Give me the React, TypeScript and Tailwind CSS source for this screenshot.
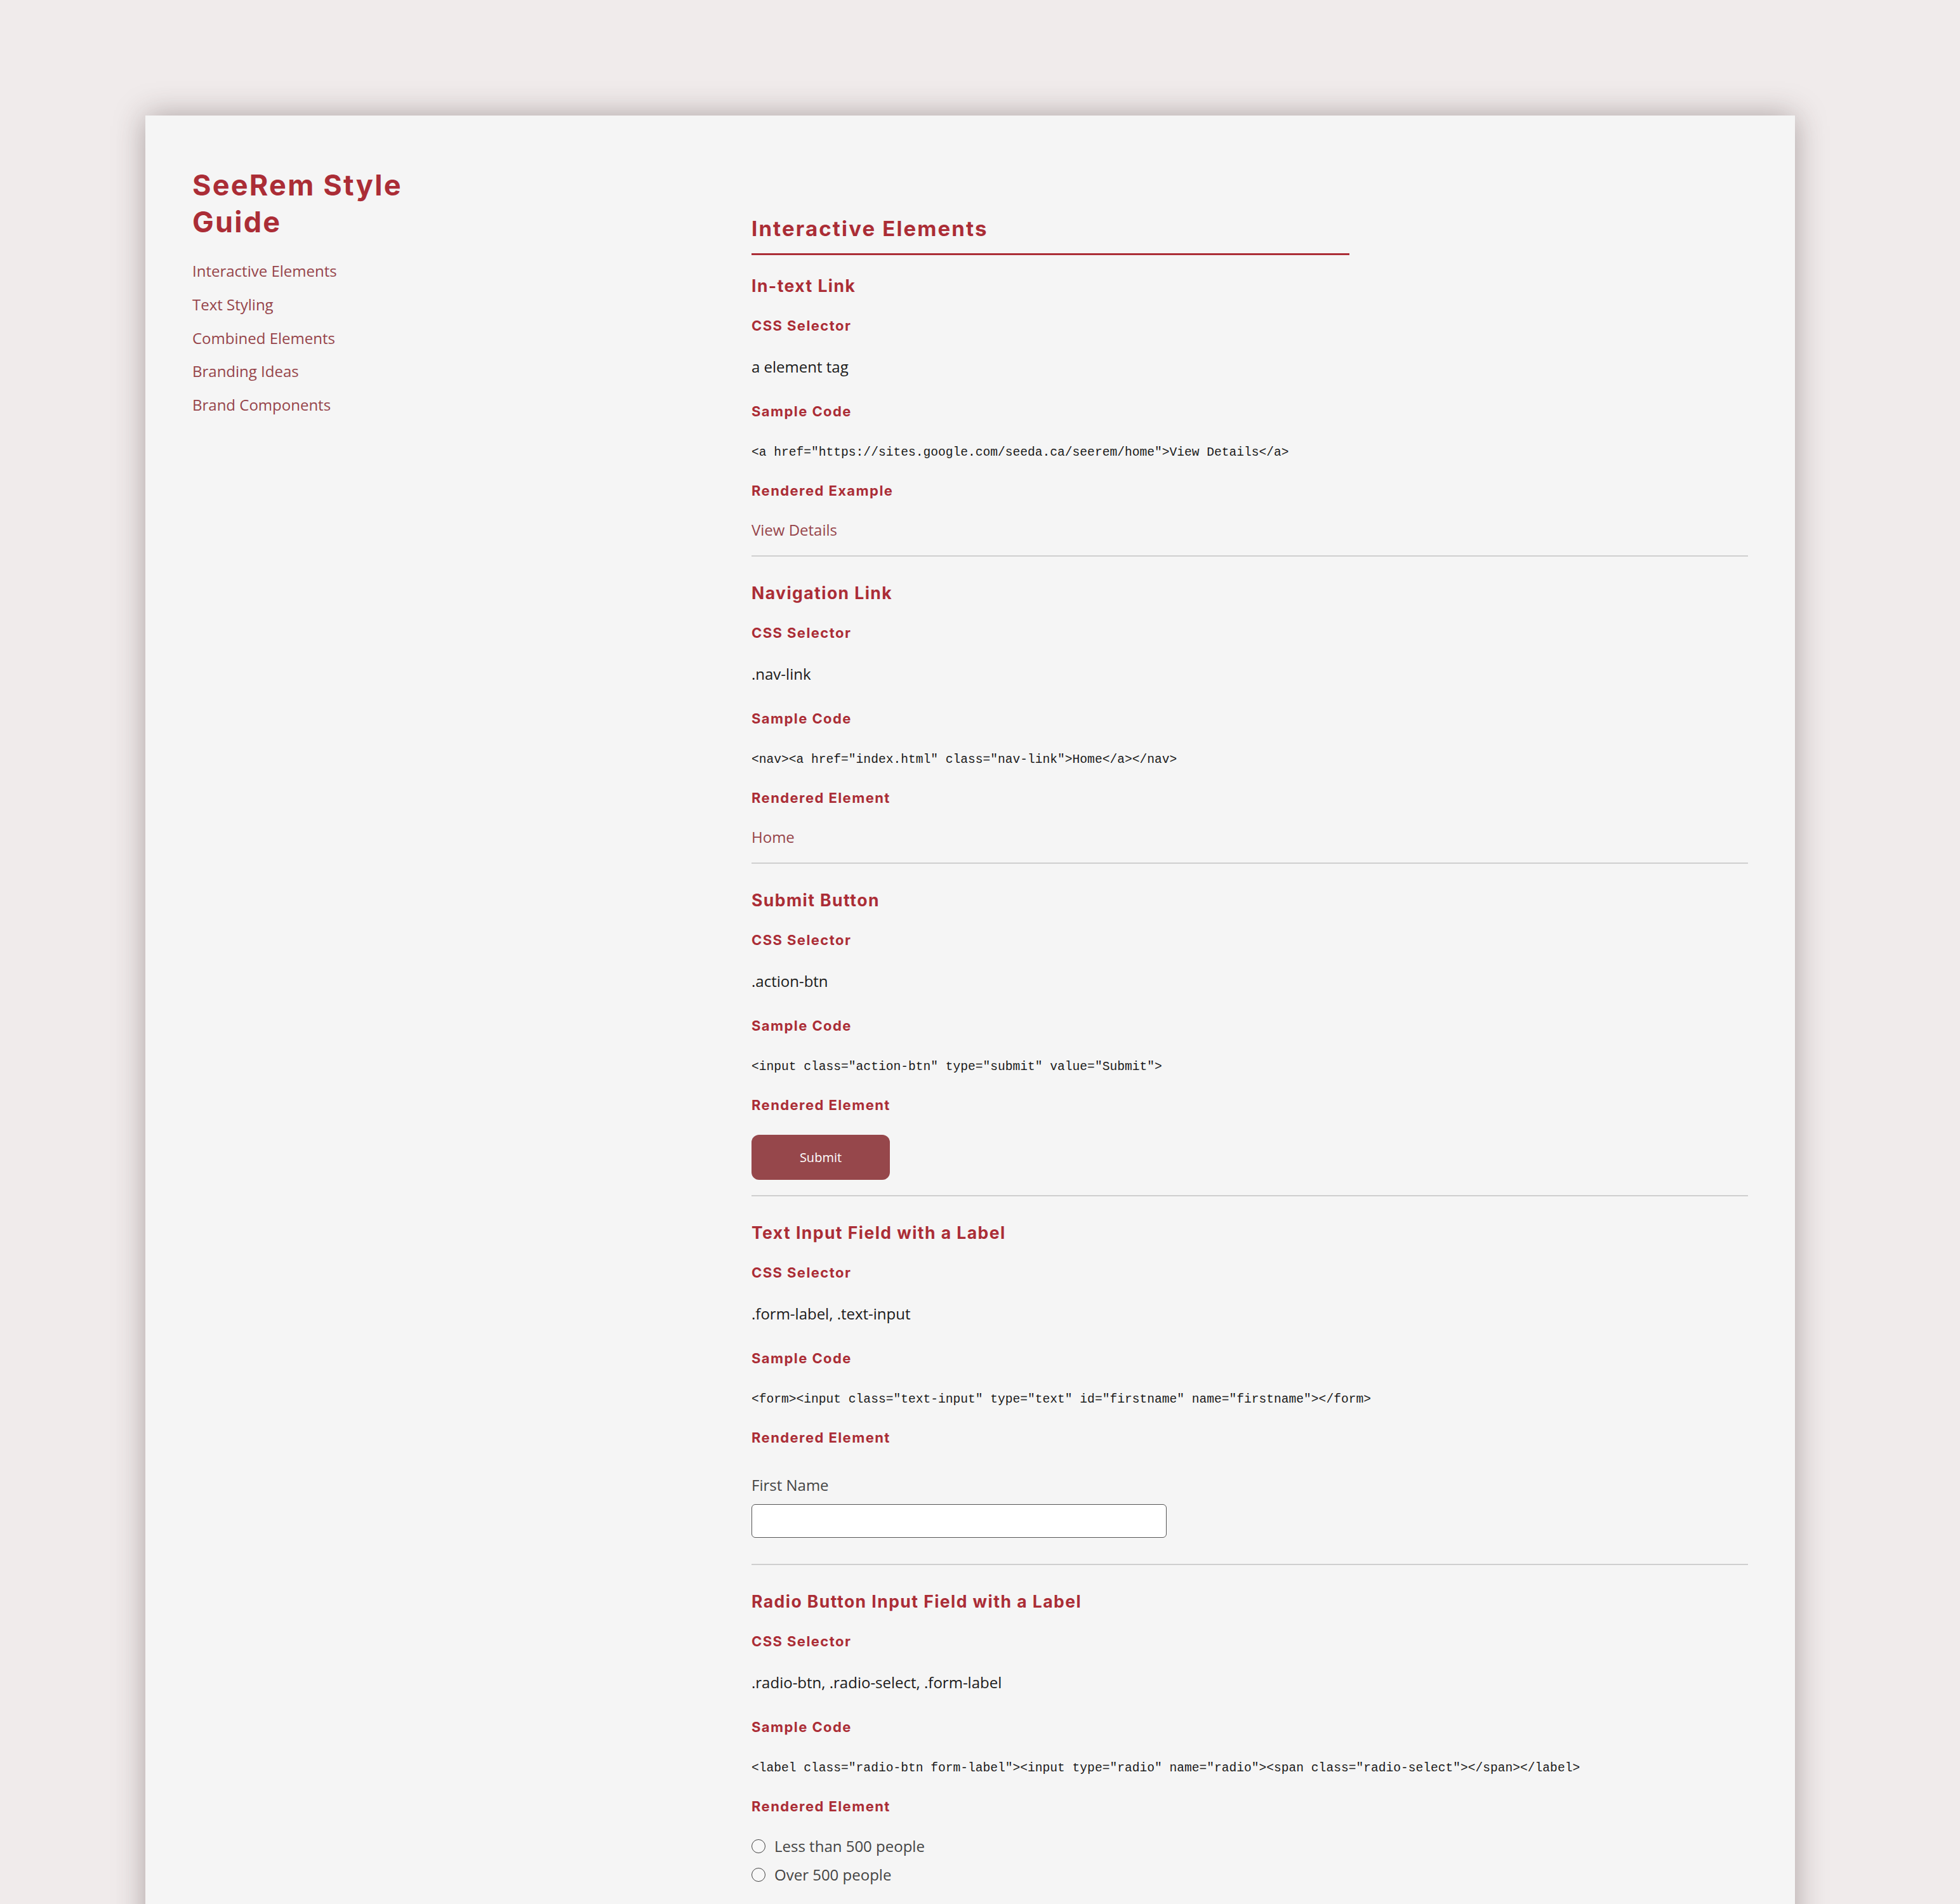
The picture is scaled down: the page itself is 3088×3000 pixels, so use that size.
import React from "react";

type Item = {
  title: string;
  selector: string;
  code: string;
  renderedLabel: string;
  kind: "link" | "nav" | "button" | "input" | "radio";
};

const items: Item[] = [
  {
    title: "In-text Link",
    selector: "a element tag",
    code: '<a href="https://sites.google.com/seeda.ca/seerem/home">View Details</a>',
    renderedLabel: "Rendered Example",
    kind: "link",
  },
  {
    title: "Navigation Link",
    selector: ".nav-link",
    code: '<nav><a href="index.html" class="nav-link">Home</a></nav>',
    renderedLabel: "Rendered Element",
    kind: "nav",
  },
  {
    title: "Submit Button",
    selector: ".action-btn",
    code: '<input class="action-btn" type="submit" value="Submit">',
    renderedLabel: "Rendered Element",
    kind: "button",
  },
  {
    title: "Text Input Field with a Label",
    selector: ".form-label, .text-input",
    code: '<form><input class="text-input" type="text" id="firstname" name="firstname"></form>',
    renderedLabel: "Rendered Element",
    kind: "input",
  },
  {
    title: "Radio Button Input Field with a Label",
    selector: ".radio-btn, .radio-select, .form-label",
    code: '<label class="radio-btn form-label"><input type="radio" name="radio"><span class="radio-select"></span></label>',
    renderedLabel: "Rendered Element",
    kind: "radio",
  },
];

const navLinks = ["Interactive Elements", "Text Styling", "Combined Elements", "Branding Ideas", "Brand Components"];

function Label({ children, className = "" }: { children: React.ReactNode; className?: string }) {
  return (
    <h4 className={`font-['Inter',sans-serif] text-[22px] leading-[28px] font-bold tracking-[0.065em] text-[#ab2d36] ${className}`}>
      {children}
    </h4>
  );
}

function Rendered({ kind }: { kind: Item["kind"] }) {
  if (kind === "link" || kind === "nav") {
    return (
      <a className="block mt-[32px] font-['Open_Sans',sans-serif] text-[24px] leading-[32px] text-[#96444a]">
        {kind === "link" ? "View Details" : "Home"}
      </a>
    );
  }
  if (kind === "button") {
    return (
      <button className="mt-[33px] w-[218px] h-[71px] rounded-[12px] bg-[#96474b] font-['Open_Sans',sans-serif] text-[20px] text-white">
        Submit
      </button>
    );
  }
  if (kind === "input") {
    return (
      <form>
        <label className="block mt-[45px] font-['Open_Sans',sans-serif] text-[24px] leading-[32px] text-[#444]">First Name</label>
        <input className="block mt-[14px] w-[654px] h-[53px] rounded-[6px] border-[1.5px] border-[#555] bg-white" type="text" />
      </form>
    );
  }
  return (
    <div className="mt-[26px]">
      {["Less than 500 people", "Over 500 people"].map((t) => (
        <label key={t} className="flex h-[45px] items-center gap-[14px] font-['Open_Sans',sans-serif] text-[24px] text-[#444]">
          <span className="w-[22px] h-[22px] rounded-full border-[1.5px] border-[#444] bg-[#f8f8f8]" />
          {t}
        </label>
      ))}
    </div>
  );
}

function Section({ item, first }: { item: Item; first: boolean }) {
  const last = item.kind === "radio";
  return (
    <section
      className={`${first ? "pt-[32px]" : "pt-[41px]"} ${item.kind === "input" ? "pb-[41px]" : "pb-[24px]"} ${
        last ? "" : "border-b-2 border-[#cfcfcf]"
      }`}
    >
      <h3 className="font-['Inter',sans-serif] text-[26.5px] leading-[32px] font-bold tracking-[0.055em] text-[#ab2d36]">
        {item.title}
      </h3>
      <Label className="mt-[33px]">CSS Selector</Label>
      <p className="mt-[35px] font-['Open_Sans',sans-serif] text-[24px] leading-[32px] text-[#1a1a1a]">{item.selector}</p>
      <Label className="mt-[40px]">Sample Code</Label>
      <pre className="mt-[37px] font-['Liberation_Mono',monospace] text-[19.6px] leading-[28px] text-[#1a1a1a]">{item.code}</pre>
      <Label className="mt-[32px]">{item.renderedLabel}</Label>
      <Rendered kind={item.kind} />
    </section>
  );
}

export default function App() {
  return (
    <div className="min-h-screen bg-[#f0ebeb] pt-[182px] pl-[229px] overflow-hidden">
      <div className="flex w-[2599px] bg-[#f5f5f5] px-[74px] pt-[81px] pb-[120px] shadow-[0_0_45px_rgba(60,40,40,0.38)]">
        <aside className="w-[881px] shrink-0">
          <h1 className="max-w-[400px] font-['Inter',sans-serif] text-[45px] leading-[58px] font-bold tracking-[0.05em] text-[#ab2d36]">
            SeeRem Style Guide
          </h1>
          <nav className="mt-[22px] flex flex-col">
            {navLinks.map((l) => (
              <a key={l} className="font-['Open_Sans',sans-serif] text-[24px] leading-[52.75px] text-[#96444a]">
                {l}
              </a>
            ))}
          </nav>
        </aside>
        <main className="flex-1 pt-[77px]">
          <h2 className="w-[60%] pb-[19px] border-b-[3px] border-[#ab2d36] font-['Inter',sans-serif] text-[33px] leading-[40px] font-bold tracking-[0.065em] text-[#ab2d36]">
            Interactive Elements
          </h2>
          {items.map((it, i) => (
            <Section key={it.title} item={it} first={i === 0} />
          ))}
        </main>
      </div>
    </div>
  );
}
